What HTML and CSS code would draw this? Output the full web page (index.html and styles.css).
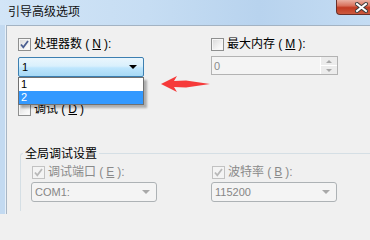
FILE: index.html
```html
<!DOCTYPE html>
<html lang="zh-CN">
<head>
<meta charset="utf-8">
<title>引导高级选项</title>
<link rel="stylesheet" href="styles.css">
</head>
<body>
<div class="window">
  <div class="titlebar">
    <span class="title">引导高级选项</span>
    <span class="close">
      <svg width="13" height="11" viewBox="0 0 13 11"><path d="M2 2 L11 9 M11 2 L2 9" stroke="#3a3a3a" stroke-width="4" stroke-linecap="square"/><path d="M2 2 L11 9 M11 2 L2 9" stroke="#ffffff" stroke-width="2" stroke-linecap="square"/></svg>
    </span>
  </div>
  <div class="frame">
    <div class="frame-left"></div>
    <div class="content">
      <div class="grid top">
        <div class="col col-a">
          <label class="chk"><span class="box"><svg width="11" height="11" viewBox="0 0 11 11"><path d="M2 5.5 L4.3 8.3 L9 2" fill="none" stroke="#4b5f92" stroke-width="1.8"/></svg></span>处理器数 (<u>N</u>):</label>
          <div class="combo focus"><span class="val">1</span><span class="arrow"></span></div>
          <div class="list">
            <div class="item">1</div>
            <div class="item sel">2</div>
          </div>
        </div>
        <div class="col col-b">
          <label class="chk"><span class="box"></span>最大内存 (<u>M</u>):</label>
          <div class="spin"><span class="val">0</span><span class="spin-btns"><span class="sbtn"><span class="up"></span></span><span class="sbtn"><span class="down"></span></span></span></div>
        </div>
      </div>
      <label class="chk debug"><span class="box"></span>调试 (<u>D</u>)</label>
      <fieldset class="group">
        <legend>全局调试设置</legend>
        <div class="grid inner">
          <div class="col col-in">
            <label class="chk dis"><span class="box"><svg width="11" height="11" viewBox="0 0 11 11"><path d="M2 5.5 L4.3 8.3 L9 2" fill="none" stroke="#b9b9b9" stroke-width="1.8"/></svg></span>调试端口 (<u>E</u>):</label>
            <div class="combo dis"><span class="val">COM1:</span><span class="arrow"></span></div>
          </div>
          <div class="col col-in">
            <label class="chk dis"><span class="box"><svg width="11" height="11" viewBox="0 0 11 11"><path d="M2 5.5 L4.3 8.3 L9 2" fill="none" stroke="#b9b9b9" stroke-width="1.8"/></svg></span>波特率 (<u>B</u>):</label>
            <div class="combo dis"><span class="val">115200</span><span class="arrow"></span></div>
          </div>
        </div>
      </fieldset>
      <svg class="pointer" width="52" height="20" viewBox="0 0 52 20"><path d="M2 10 L18 2 L15 7 L27 6.5 L51 10 L27 13.5 L15 13 L18 18 Z" fill="#f63a3a"/></svg>
    </div>
  </div>
</div>
</body>
</html>
```

FILE: styles.css
```css
html, body {
  margin: 0;
  padding: 0;
}
body {
  width: 370px;
  height: 214px;
  overflow: hidden;
  font-family: "Liberation Sans", "Noto Sans CJK SC", sans-serif;
  font-size: 12px;
  color: #000;
  background: #f0f0f0;
}
.window {
  display: flex;
  flex-direction: column;
  width: 370px;
  height: 214px;
  overflow: hidden;
}
.titlebar {
  height: 25px;
  flex: none;
  display: flex;
  align-items: flex-start;
  background: linear-gradient(90deg, #d2e5f7 0%, #c6ddf3 40%, #b8d3ee 70%, #c4dcf3 100%);
}
.title {
  margin: 4px 0 0 8px;
  font-family: "Noto Sans CJK SC", sans-serif;
  font-size: 12px;
  line-height: 14px;
  color: #111;
}
.close {
  margin-left: auto;
  width: 31px;
  height: 14px;
  display: flex;
  align-items: center;
  justify-content: flex-end;
  padding-right: 2px;
  border: 1px solid #6a3029;
  border-top: none;
  border-right: none;
  border-radius: 0 0 0 4px;
  background: linear-gradient(#eab0a2 0%, #d9735e 40%, #c23b22 55%, #cc5a3f 100%);
}
.frame {
  flex: 1;
  display: flex;
  min-height: 0;
  overflow: hidden;
}
.frame-left {
  width: 5px;
  flex: none;
  background: #c3daf1;
  border-right: 1px solid #e6f0fa;
}
.content {
  position: relative;
  flex: 1;
  background: #f0f0f0;
  border-top: 1px solid #a3b3c3;
  border-left: 1px solid #a8b6c4;
  padding: 12px 0 0 11px;
  min-width: 0;
}
.grid {
  display: grid;
  align-items: start;
}
.top {
  grid-template-columns: 193px 130px;
}
.col {
  display: flex;
  flex-direction: column;
  position: relative;
}
.col-a { gap: 6px; }
.col-b { gap: 5px; }
.chk {
  display: flex;
  align-items: center;
  gap: 3px;
  height: 13px;
  line-height: 13px;
  font-size: 12px;
  white-space: nowrap;
}
.chk u { text-decoration: underline; }
.box {
  width: 11px;
  height: 11px;
  flex: none;
  border: 1px solid #8e8f8f;
  background: linear-gradient(135deg, #d8d8d8 0%, #f2f2f2 60%, #ffffff 100%);
  box-shadow: inset 0 0 0 1px #f6f6f6;
  display: flex;
}
.dis { color: #8a8a8a; }
.dis .box {
  border-color: #c2c2c2;
  background: #f4f4f4;
  box-shadow: none;
}
.combo {
  height: 18px;
  display: flex;
  align-items: center;
  justify-content: space-between;
  padding: 0 6px 0 3px;
  width: 115px;
  border: 1px solid #adb2b5;
  border-radius: 3px;
  background: #f2f2f2;
  font-size: 11px;
}
.combo.focus {
  border-color: #3c7fb1;
  border-radius: 2px;
  background: linear-gradient(#eaf6fd 0%, #d9f0fc 45%, #bee6fd 55%, #a7d9f5 100%);
}
.combo.dis {
  color: #868686;
  background: #f4f4f4;
}
.arrow {
  width: 0;
  height: 0;
  border-left: 4px solid transparent;
  border-right: 4px solid transparent;
  border-top: 4px solid #000;
}
.combo.dis .arrow { border-top-color: #a8a8a8; }
.list {
  position: absolute;
  top: 39px;
  left: 0;
  width: 124px;
  border: 1px solid #707070;
  background: #fff;
  box-shadow: 3px 3px 2px rgba(0, 0, 0, 0.28);
  z-index: 2;
  font-size: 11px;
}
.item {
  height: 13px;
  line-height: 13px;
  padding-left: 2px;
}
.item.sel {
  background: #3399ff;
  color: #fff;
}
.spin {
  width: 123px;
  height: 17px;
  display: flex;
  align-items: center;
  justify-content: space-between;
  border: 1px solid #b3b3b3;
  background: #f4f4f4;
  color: #8a8a8a;
  font-size: 11px;
  padding-left: 2px;
}
.spin-btns {
  display: flex;
  flex-direction: column;
  width: 16px;
  height: 17px;
  border-left: 1px solid #ffffff;
}
.sbtn {
  flex: 1;
  display: flex;
  align-items: center;
  justify-content: center;
  background: #ececec;
}
.sbtn + .sbtn { border-top: 1px solid #ffffff; }
.up, .down {
  width: 0;
  height: 0;
  border-left: 3px solid transparent;
  border-right: 3px solid transparent;
}
.up { border-bottom: 3px solid #a8a8a8; }
.down { border-top: 3px solid #a8a8a8; }
.debug {
  margin-top: 26px;
}
.group {
  margin: 30px 0 0 2px;
  padding: 0 0 9px 0;
  border: 1px solid #d5dfe5;
  border-right: none;
  border-bottom: none;
  border-radius: 3px 0 0 0;
  min-width: 0;
}
.group legend {
  margin-left: 2px;
  padding: 0 2px;
  font-family: "Noto Sans CJK SC", sans-serif;
  font-size: 12px;
  line-height: 14px;
}
.inner {
  grid-template-columns: 180px 130px;
  padding: 6px 0 0 10px;
}
.col-in { gap: 3px; }
.col-in .chk { margin-left: 1px; }
.pointer {
  position: absolute;
  left: 152px;
  top: 48px;
}
```
